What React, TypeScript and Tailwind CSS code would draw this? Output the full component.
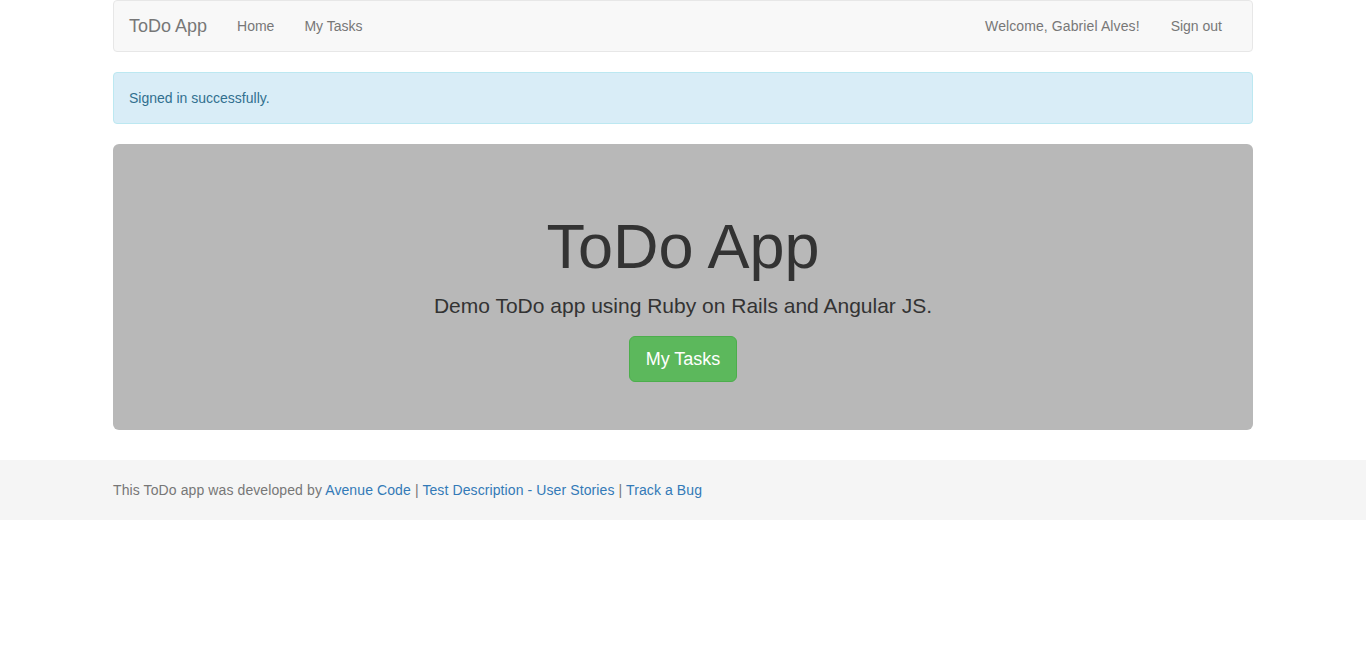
export default function App() {
  const font = { fontFamily: '"Liberation Sans", Arial, Helvetica, sans-serif' };
  return (
    <div className="min-h-[654px] bg-white text-[14px] leading-[20px] text-[#333]" style={font}>
      <div className="w-[1170px] mx-auto px-[15px]">
        <nav className="h-[52px] flex items-stretch border border-[#e7e7e7] bg-[#f8f8f8] rounded-[4px] pr-[15px] mb-[20px]">
          <a className="px-[15px] py-[15px] text-[18px] leading-[20px] text-[#777]">ToDo App</a>
          <ul className="flex">
            <li><a className="block px-[15px] py-[15px] text-[#777]">Home</a></li>
            <li><a className="block px-[15px] py-[15px] text-[#777]">My Tasks</a></li>
          </ul>
          <ul className="flex ml-auto">
            <li><span className="block pl-[15px] pr-[16px] py-[15px] text-[#777] tracking-[0.1px]">Welcome, Gabriel Alves!</span></li>
            <li><a className="block px-[15px] py-[15px] text-[#777]">Sign out</a></li>
          </ul>
        </nav>
        <div className="h-[52px] px-[15px] py-[15px] border border-[#bce8f1] bg-[#d9edf7] text-[#31708f] rounded-[4px] mb-[20px]">
          Signed in successfully.
        </div>
        <div className="h-[286px] rounded-[6px] bg-[#b8b8b8] px-[60px] pt-[48px] pb-[48px] mb-[30px] flex flex-col items-center text-center">
          <h1 className="mt-[20px] mb-[10px] text-[63px] leading-[1.1] text-[#333]">ToDo App</h1>
          <p className="mb-[15px] text-[21px] leading-[30px] text-[#333]">Demo ToDo app using Ruby on Rails and Angular JS.</p>
          <a className="block h-[46px] px-[16px] py-[10px] text-[18px] leading-[24px] text-white bg-[#5cb85c] border border-[#4cae4c] rounded-[6px]">My Tasks</a>
        </div>
      </div>
      <footer className="h-[60px] bg-[#f5f5f5]">
        <div className="w-[1170px] mx-auto px-[15px] py-[20px] text-[#777] tracking-[0.1px]">
          This ToDo app was developed by <a className="text-[#337ab7]">Avenue Code</a> | <a className="text-[#337ab7]">Test Description - User Stories</a> | <a className="text-[#337ab7]">Track a Bug</a>
        </div>
      </footer>
    </div>
  );
}
